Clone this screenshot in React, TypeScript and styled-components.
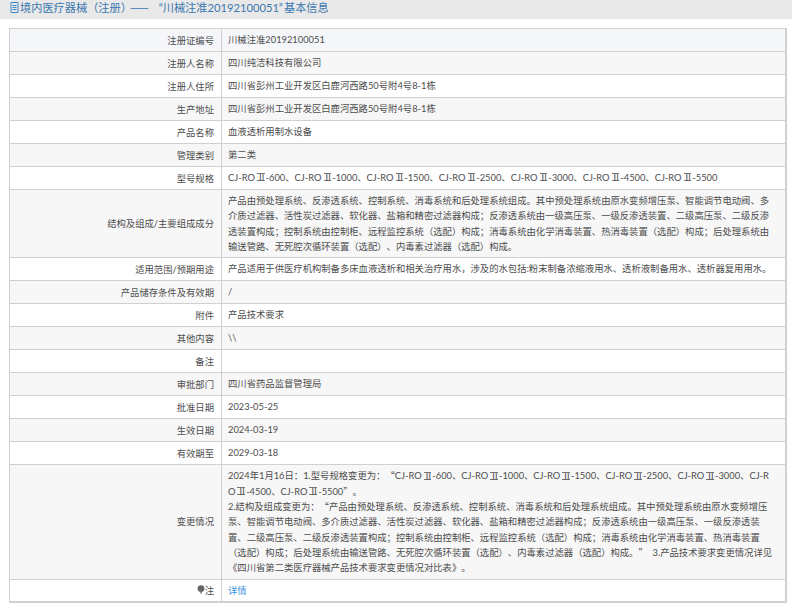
import { Fragment } from "react"
import styled, { createGlobalStyle } from "styled-components"

const rows: { label: string; lines: string[]; link?: boolean }[] = [
	{ label: "注册证编号", lines: ["川械注准20192100051"] },
	{ label: "注册人名称", lines: ["四川纯洁科技有限公司"] },
	{ label: "注册人住所", lines: ["四川省彭州工业开发区白鹿河西路50号附4号8-1栋"] },
	{ label: "生产地址", lines: ["四川省彭州工业开发区白鹿河西路50号附4号8-1栋"] },
	{ label: "产品名称", lines: ["血液透析用制水设备"] },
	{ label: "管理类别", lines: ["第二类"] },
	{
		label: "型号规格",
		lines: ["CJ-ROⅡ-600、CJ-ROⅡ-1000、CJ-ROⅡ-1500、CJ-ROⅡ-2500、CJ-ROⅡ-3000、CJ-ROⅡ-4500、CJ-ROⅡ-5500"],
	},
	{
		label: "结构及组成/主要组成成分",
		lines: [
			"产品由预处理系统、反渗透系统、控制系统、消毒系统和后处理系统组成。其中预处理系统由原水变频增压泵、智能调节电动阀、多",
			"介质过滤器、活性炭过滤器、软化器、盐箱和精密过滤器构成；反渗透系统由一级高压泵、一级反渗透装置、二级高压泵、二级反渗",
			"透装置构成；控制系统由控制柜、远程监控系统（选配）构成；消毒系统由化学消毒装置、热消毒装置（选配）构成；后处理系统由",
			"输送管路、无死腔次循环装置（选配）、内毒素过滤器（选配）构成。",
		],
	},
	{
		label: "适用范围/预期用途",
		lines: ["产品适用于供医疗机构制备多床血液透析和相关治疗用水，涉及的水包括:粉末制备浓缩液用水、透析液制备用水、透析器复用用水。"],
	},
	{ label: "产品储存条件及有效期", lines: ["/"] },
	{ label: "附件", lines: ["产品技术要求"] },
	{ label: "其他内容", lines: ["\\\\"] },
	{ label: "备注", lines: [""] },
	{ label: "审批部门", lines: ["四川省药品监督管理局"] },
	{ label: "批准日期", lines: ["2023-05-25"] },
	{ label: "生效日期", lines: ["2024-03-19"] },
	{ label: "有效期至", lines: ["2029-03-18"] },
	{
		label: "变更情况",
		lines: [
			"2024年1月16日：1.型号规格变更为：“CJ-ROⅡ-600、CJ-ROⅡ-1000、CJ-ROⅡ-1500、CJ-ROⅡ-2500、CJ-ROⅡ-3000、CJ-R",
			"OⅡ-4500、CJ-ROⅡ-5500”。",
			"2.结构及组成变更为：“产品由预处理系统、反渗透系统、控制系统、消毒系统和后处理系统组成。其中预处理系统由原水变频增压",
			"泵、智能调节电动阀、多介质过滤器、活性炭过滤器、软化器、盐箱和精密过滤器构成；反渗透系统由一级高压泵、一级反渗透装",
			"置、二级高压泵、二级反渗透装置构成；控制系统由控制柜、远程监控系统（选配）构成；消毒系统由化学消毒装置、热消毒装置",
			"（选配）构成；后处理系统由输送管路、无死腔次循环装置（选配）、内毒素过滤器（选配）构成。”  3.产品技术要求变更情况详见",
			"《四川省第二类医疗器械产品技术要求变更情况对比表》。",
		],
	},
	{ label: "注", lines: ["详情"], link: true },
]

// numerals and quotes are drawn apart, the latin font has them too narrow
function renderLine(text: string) {
	return text.split(/([Ⅱ“”])/).map((part, i) => (
		<Fragment key={i}>
			{part === "Ⅱ" ? <Numeral>{part}</Numeral> : part === "“" || part === "”" ? <Quote>{part}</Quote> : part}
		</Fragment>
	))
}

function DocIcon() {
	return (
		<svg width="9" height="11" viewBox="0 0 9 11" fill="none" stroke="#3f86c4" strokeWidth="1">
			<path d="M1 .5h7v10H1z" />
			<path d="M2.5 3.5h4M2.5 5.5h4M2.5 7.5h4" />
		</svg>
	)
}

function PinIcon() {
	return (
		<svg width="8" height="10" viewBox="0 0 8 10">
			<circle cx="4" cy="3.6" r="3.4" fill="#666" />
			<path d="M2.6 6.5h2.8L4 9.6z" fill="#888" />
		</svg>
	)
}

export default function App() {
	return (
		<>
			<GlobalStyle />
			<Header>
				<DocIcon />
				<span>
					境内医疗器械（注册）<Dash>——</Dash>“川械注准20192100051”<Tail>基本信息</Tail>
				</span>
			</Header>
			<Wrapper>
				<Table>
					<tbody>
						{rows.map((row, i) => (
							<Row key={row.label} $index={i}>
								<LabelCell>
									{row.link && <PinIcon />}
									{row.label}
								</LabelCell>
								<ValueCell $tall={row.lines.length > 1}>
									{row.link ? (
										<DetailLink href="#">详情</DetailLink>
									) : (
										row.lines.map((line, j) => <Line key={j}>{renderLine(line)}</Line>)
									)}
								</ValueCell>
							</Row>
						))}
					</tbody>
				</Table>
			</Wrapper>
		</>
	)
}

const GlobalStyle = createGlobalStyle`
	html,
	body {
		margin: 0;
		background: #fff;
		font-family: Lato, "Noto Sans CJK SC", sans-serif;
		font-size: 9.33px;
		color: #4d4d4d;
		text-spacing-trim: space-all;
		text-autospace: no-autospace;
	}
`

const Header = styled.div`
	height: 19px;
	box-sizing: border-box;
	background: #e9e9e9;
	display: flex;
	align-items: flex-start;
	gap: 1px;
	padding: 1px 0 0 10px;
	font-size: 11.2px;
	line-height: 13px;
	color: #3b78b0;
	white-space: pre;
	overflow: hidden;

	svg {
		margin-top: 1px;
	}
`

const Dash = styled.span`
	font-family: "Noto Sans CJK SC", sans-serif;
	margin: 0 10px 0 -2px;
`

const Tail = styled.span`
	margin-left: 1px;
`

const Wrapper = styled.div`
	padding: 9px 5px 0 9px;
`

const Table = styled.table`
	width: 778px;
	border-collapse: collapse;
	border: 2px solid #d0d0d0;
	border-width: 1px 2px 2px 1px;
	table-layout: fixed;
`

const Row = styled.tr<{ $index: number }>`
	background: ${(props) =>
		props.$index === 0 ? "#f5f6fa" : props.$index % 2 === 1 ? "#f7f7f7" : "#fff"};
`

const LabelCell = styled.td`
	box-sizing: border-box;
	width: 212px;
	height: 23px;
	padding: 0 7px 1px 0;
	border: 1px solid #d0d0d0;
	text-align: right;
	white-space: nowrap;

	svg {
		vertical-align: -1px;
	}
`

const ValueCell = styled.td<{ $tall: boolean }>`
	padding: ${(props) => (props.$tall ? "3px 6px" : "0 6px 1px")};
	border: 1px solid #d0d0d0;
	white-space: pre;
`

const Line = styled.div`
	line-height: 15.33px;
	min-height: 15px;
`

const Numeral = styled.span`
	display: inline-block;
	box-sizing: border-box;
	width: 7.7px;
	height: 8px;
	margin: 0 1px 0 2px;
	border: solid #777;
	border-width: 1px 0;
	line-height: 6px;
	text-align: center;
	vertical-align: -0.5px;
	font-family: "Noto Sans CJK SC", sans-serif;
`

const Quote = styled.span`
	font-family: "Noto Sans CJK SC", sans-serif;
`

const DetailLink = styled.a`
	color: #3d93e0;
	text-decoration: none;
`
